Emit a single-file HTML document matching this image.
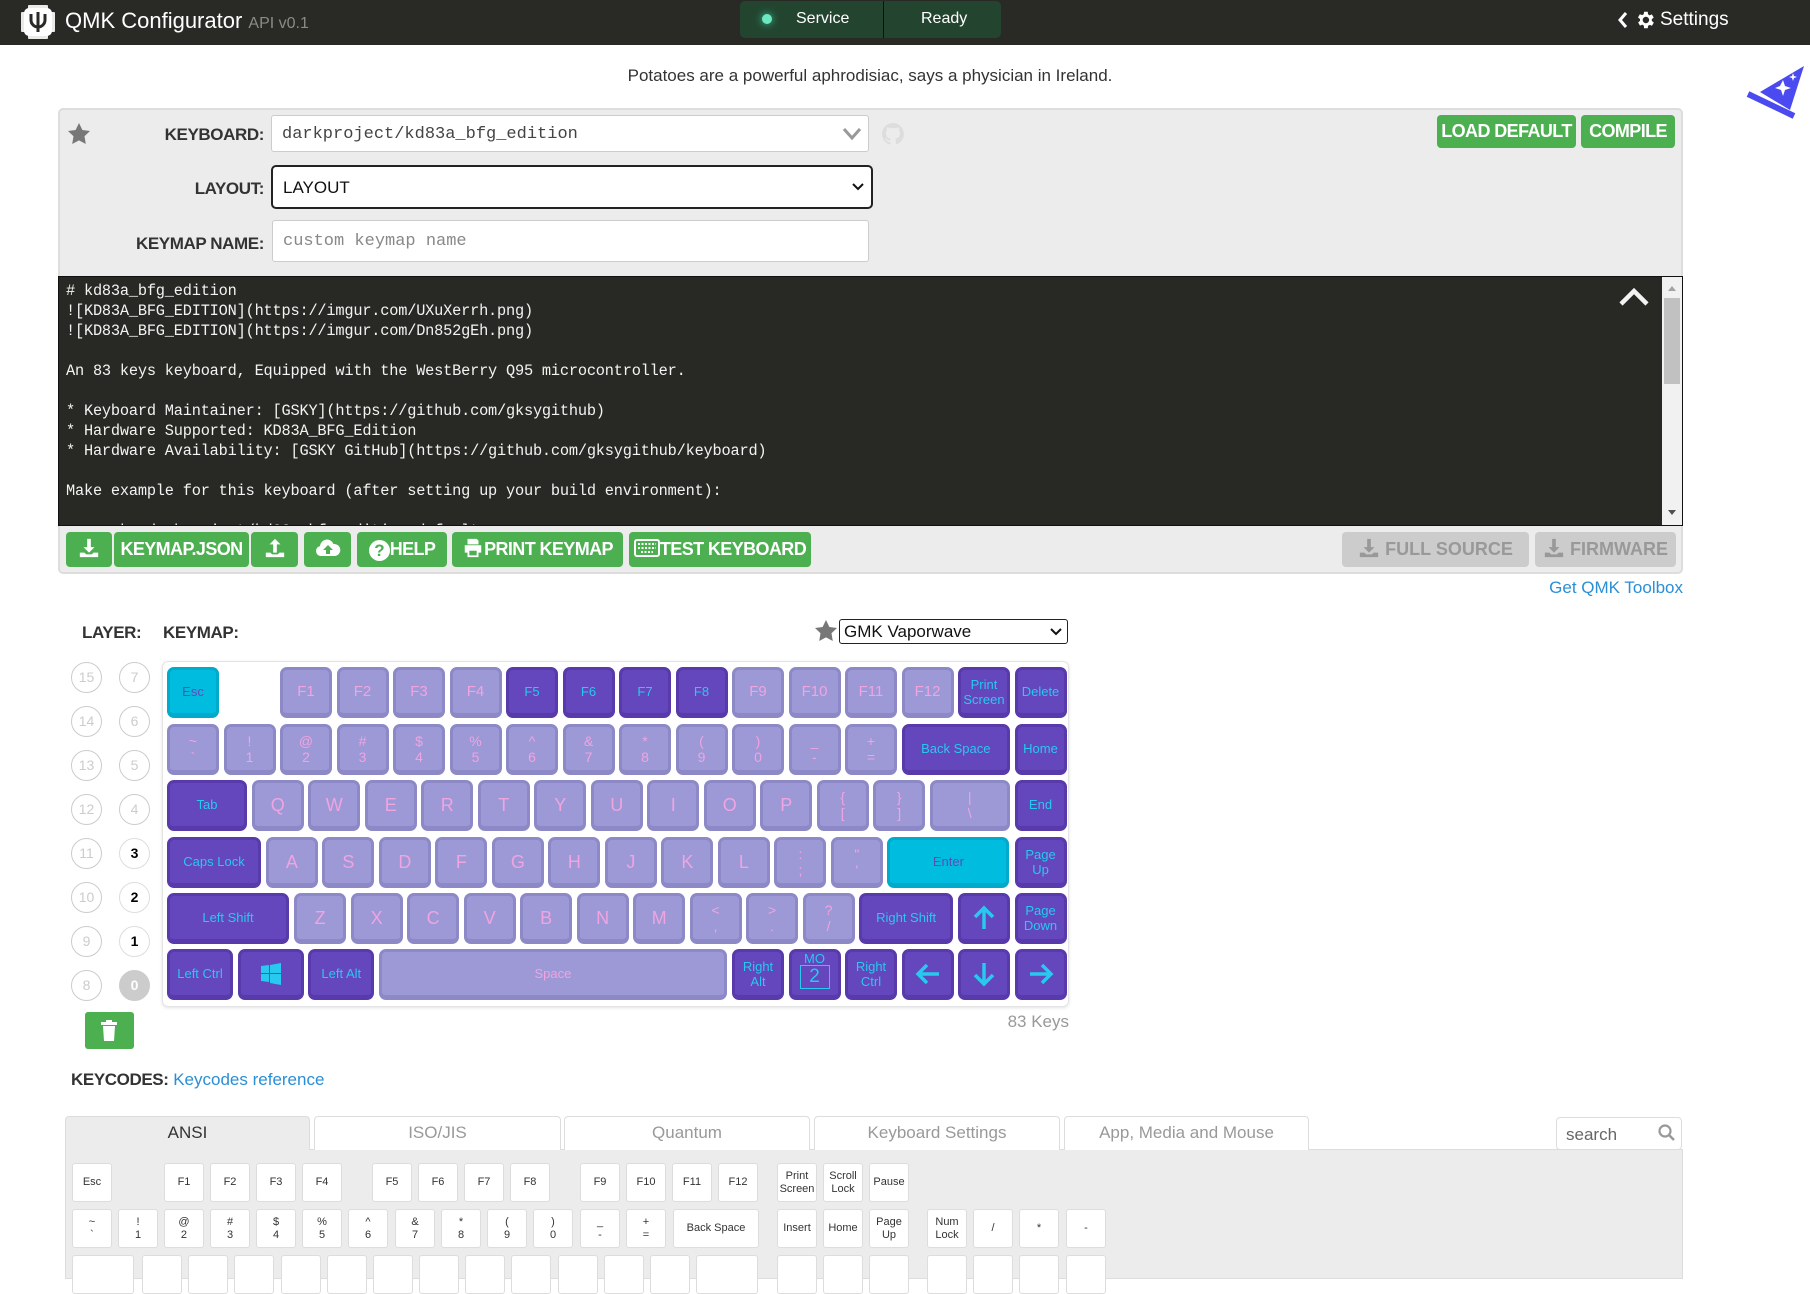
<!DOCTYPE html>
<html><head><meta charset="utf-8">
<style>
*{box-sizing:border-box;margin:0;padding:0}
body{width:1810px;height:1267px;overflow:hidden;background:#fff;font-family:"Liberation Sans",sans-serif;position:relative;color:#333}
.a{position:absolute}
.top{left:0;top:0;width:1810px;height:45px;background:#292925}
.lbl{font-weight:bold;font-size:17px;color:#333;letter-spacing:-0.4px;text-align:right}
.inp{background:#fff;border:1px solid #ccc;border-radius:3px;font-family:"Liberation Mono",monospace;font-size:17px;padding-left:10px;line-height:36px}
.gb{background:#4caf50;color:#fff;font-weight:bold;font-size:18px;letter-spacing:-0.6px;border-radius:4px;text-align:center;line-height:35px;top:532px;height:35px}
.grey{background:#ccc;color:#999;font-weight:bold;font-size:18px;border-radius:4px;text-align:center;line-height:35px;top:532px;height:35px}
.rd{left:58px;top:276px;width:1625px;height:250px;background:#282824;border:1px solid #111;overflow:hidden}
.rd pre{font-family:"Liberation Mono",monospace;font-size:15.3px;line-height:20px;color:#f3f3f3;padding:4px 0 0 7px;letter-spacing:-0.2px}
.lc{width:31px;height:31px;border-radius:50%;border:1px solid #ccc;color:#ccc;font-size:14px;text-align:center;line-height:29px}
.lc.b{color:#000;font-weight:bold;border-color:#ddd}
.k{position:absolute;height:51px;border-radius:7px;background:#9d99d6;border:3px solid #8d89c6;border-bottom-width:5px;color:#f0a4e0;font-size:18px;text-align:center;display:flex;align-items:center;justify-content:center;line-height:18px}
.k.s{font-size:14px;line-height:16px}
.k.d{background:#6446bd;border-color:#583aab;color:#28c9ee;font-size:13px;line-height:15px}
.k.c{background:#00bde0;border-color:#00aacb;color:#6248b9;font-size:13px}
.kc{position:absolute;width:40px;height:39px;background:#fff;border:1px solid #ddd;border-radius:3px;font-size:11px;color:#333;text-align:center;display:flex;align-items:center;justify-content:center;line-height:13px}
.tab{top:1116px;height:34px;border:1px solid #ddd;border-bottom:none;border-radius:4px 4px 0 0;font-size:17px;color:#999;text-align:center;line-height:32px;background:#fff}
</style></head><body>
<div class="a top"></div>
<svg class="a" style="left:20px;top:4px" width="36" height="36" viewBox="0 0 36 36"><g fill="#fff"><rect x="4" y="4" width="28" height="28" rx="5"/><rect x="8" y="1" width="20" height="34" rx="1" opacity=".9"/><rect x="1" y="8" width="34" height="20" rx="1" opacity=".9"/></g><path d="M11 10v6a7 7 0 0 0 14 0v-6M18 8v20" stroke="#292925" stroke-width="3" fill="none"/></svg>
<div class="a" style="left:65px;top:8px;font-size:22px;color:#fff">QMK Configurator <span style="font-size:16px;color:#8a8a86">API v0.1</span></div>
<div class="a" style="left:740px;top:1px;width:261px;height:37px;background:#234530;border-radius:5px"></div>
<div class="a" style="left:883px;top:1px;width:1px;height:37px;background:#111"></div>
<div class="a" style="left:762px;top:14px;width:10px;height:10px;border-radius:50%;background:#6ee8c0;box-shadow:0 0 8px #3c9"></div>
<div class="a" style="left:796px;top:10px;font-size:16px;color:#fff">Service</div>
<div class="a" style="left:921px;top:10px;font-size:16px;color:#fff">Ready</div>
<svg class="a" style="left:1617px;top:11px" width="12" height="18" viewBox="0 0 12 18"><path d="M9 2L3 9l6 7" stroke="#fff" stroke-width="3" fill="none"/></svg>
<svg class="a" style="left:1634px;top:9px" width="22" height="22" viewBox="0 0 24 24"><path fill="#fff" d="M19.4 13a7.5 7.5 0 0 0 0-2l2.1-1.6-2-3.5-2.5 1a7.6 7.6 0 0 0-1.7-1L15 3h-4l-.4 2.7a7.6 7.6 0 0 0-1.7 1l-2.5-1-2 3.5L6.6 11a7.5 7.5 0 0 0 0 2l-2.1 1.6 2 3.5 2.5-1a7.6 7.6 0 0 0 1.7 1L11 21h4l.4-2.7a7.6 7.6 0 0 0 1.7-1l2.5 1 2-3.5zM13 15.5a3.5 3.5 0 1 1 0-7 3.5 3.5 0 0 1 0 7z"/></svg>
<div class="a" style="left:1660px;top:9px;font-size:19px;color:#fff">Settings</div>

<div class="a" style="left:0;top:66px;width:1740px;text-align:center;font-size:17px;color:#333">Potatoes are a powerful aphrodisiac, says a physician in Ireland.</div>
<svg class="a" style="left:1746px;top:64px" width="62" height="56" viewBox="0 0 62 56"><path d="M14 28L58 2 44 46z" fill="#4a4af0"/><path d="M2 30l46 22" stroke="#4a4af0" stroke-width="6"/><path d="M34 22l3-6 2 6 6 2-6 2-2 6-2-6-6-2z" fill="#fff"/><path d="M46 12l1-3 1 3 3 1-3 1-1 3-1-3-3-1z" fill="#fff"/></svg>

<div class="a" style="left:58px;top:108px;width:1625px;height:466px;background:#ececec;border:2px solid #ddd;border-radius:5px"></div>
<svg class="a" style="left:67px;top:122px" width="24" height="24" viewBox="0 0 24 24"><path fill="#777" d="M12 1l3.4 7 7.6 1-5.5 5.3 1.3 7.7L12 18.4 5.2 22l1.3-7.7L1 9l7.6-1z"/></svg>
<div class="a lbl" style="left:120px;top:125px;width:144px">KEYBOARD:</div>
<div class="a inp" style="left:271px;top:115px;width:598px;height:37px;color:#444;line-height:38px">darkproject/kd83a_bfg_edition</div>
<svg class="a" style="left:842px;top:127px" width="20" height="14" viewBox="0 0 20 14"><path d="M2 2l8 9 8-9" stroke="#999" stroke-width="3" fill="none"/></svg>
<svg class="a" style="left:882px;top:123px" width="22" height="22" viewBox="0 0 16 16"><path fill="#ddd" d="M8 0a8 8 0 0 0-2.5 15.6c.4 0 .5-.2.5-.4v-1.5c-2.2.5-2.7-1-2.7-1-.4-.9-.9-1.2-.9-1.2-.7-.5.1-.5.1-.5.8.1 1.200.8 1.2.8.7 1.3 1.9.9 2.3.7.1-.5.3-.9.5-1.1-1.8-.2-3.6-.9-3.6-4 0-.9.3-1.6.8-2.1-.1-.2-.4-1 .1-2.1 0 0 .7-.2 2.2.8a7.5 7.5 0 0 1 4 0c1.5-1 2.2-.8 2.2-.8.4 1.1.2 1.9.1 2.1.5.6.8 1.3.8 2.1 0 3.1-1.9 3.8-3.6 4 .3.3.6.8.6 1.5v2.2c0 .2.1.5.6.4A8 8 0 0 0 8 0z"/></svg>
<div class="a gb" style="left:1437px;top:115px;width:139px;height:33px;line-height:33px">LOAD DEFAULT</div>
<div class="a gb" style="left:1581px;top:115px;width:94px;height:33px;line-height:33px">COMPILE</div>
<div class="a lbl" style="left:120px;top:179px;width:144px">LAYOUT:</div>
<div class="a inp" style="left:271px;top:165px;width:602px;height:44px;border:2px solid #222;border-radius:5px;font-family:'Liberation Sans',sans-serif;font-size:17px;line-height:41px;color:#111">LAYOUT</div>
<svg class="a" style="left:852px;top:182px" width="12" height="10" viewBox="0 0 12 10"><path d="M1 2l5 5 5-5" stroke="#111" stroke-width="2" fill="none"/></svg>
<div class="a lbl" style="left:100px;top:234px;width:164px">KEYMAP NAME:</div>
<div class="a inp" style="left:272px;top:220px;width:597px;height:42px;line-height:42px;color:#888">custom keymap name</div>

<div class="a rd"><pre># kd83a_bfg_edition
![KD83A_BFG_EDITION](https://imgur.com/UXuXerrh.png)
![KD83A_BFG_EDITION](https://imgur.com/Dn852gEh.png)

An 83 keys keyboard, Equipped with the WestBerry Q95 microcontroller.

* Keyboard Maintainer: [GSKY](https://github.com/gksygithub)
* Hardware Supported: KD83A_BFG_Edition
* Hardware Availability: [GSKY GitHub](https://github.com/gksygithub/keyboard)

Make example for this keyboard (after setting up your build environment):

    make darkproject/kd83a_bfg_edition:default</pre></div>
<div class="a" style="left:1662px;top:277px;width:20px;height:248px;background:#f1f1f1"></div>
<div class="a" style="left:1664px;top:298px;width:16px;height:86px;background:#c1c1c1"></div>
<svg class="a" style="left:1666px;top:283px" width="12" height="10"><path d="M2 8l4-5 4 5z" fill="#a3a3a3"/></svg>
<svg class="a" style="left:1666px;top:508px" width="12" height="10"><path d="M2 2l4 5 4-5z" fill="#505050"/></svg>
<svg class="a" style="left:1618px;top:286px" width="32" height="22" viewBox="0 0 32 22"><path d="M3 18L16 5l13 13" stroke="#f3f3f3" stroke-width="4.5" fill="none"/></svg>

<div class="a gb" style="left:66px;width:46px"><svg width="22" height="22" viewBox="0 0 24 24" style="vertical-align:-4px"><path fill="#fff" d="M10 2h4v9h4l-6 6-6-6h4zM2 17h5l2 2h6l2-2h5v5H2z"/></svg></div>
<div class="a gb" style="left:114px;width:135px">KEYMAP.JSON</div>
<div class="a gb" style="left:251px;width:47px"><svg width="22" height="22" viewBox="0 0 24 24" style="vertical-align:-4px"><path fill="#fff" d="M10 17h4V8h4l-6-6-6 6h4zM2 17h5l2 2h6l2-2h5v5H2z"/></svg></div>
<div class="a gb" style="left:304px;width:47px"><svg width="26" height="22" viewBox="0 0 26 22" style="vertical-align:-4px"><path fill="#fff" d="M6 19a5 5 0 0 1-1-9.9A7 7 0 0 1 18.5 7 6 6 0 0 1 20 19z"/><path fill="#4caf50" d="M13 8l-5 5h3v4h4v-4h3z"/></svg></div>
<div class="a gb" style="left:357px;width:90px"><span style="display:inline-block;width:21px;height:21px;border-radius:50%;background:#fff;color:#4caf50;font-size:17px;line-height:21px;vertical-align:-1px">?</span>HELP</div>
<div class="a gb" style="left:452px;width:171px"><svg width="22" height="22" viewBox="0 0 24 24" style="vertical-align:-4px"><path fill="#fff" d="M6 2h10l2 2v4H6zM3 9h18v8h-3v5H6v-5H3zM8 15v5h8v-5z"/></svg>PRINT KEYMAP</div>
<div class="a gb" style="left:629px;width:182px"><svg width="26" height="18" viewBox="0 0 26 18" style="vertical-align:-2px"><rect x="1" y="1" width="24" height="16" rx="2" fill="none" stroke="#fff" stroke-width="2"/><path stroke="#fff" stroke-width="2" d="M4 5h18M4 9h18M7 13h12" stroke-dasharray="2 1.5"/></svg>TEST KEYBOARD</div>
<div class="a grey" style="left:1342px;width:187px"><svg width="22" height="22" viewBox="0 0 24 24" style="vertical-align:-4px"><path fill="#999" d="M10 2h4v9h4l-6 6-6-6h4zM2 17h5l2 2h6l2-2h5v5H2z"/></svg> FULL SOURCE</div>
<div class="a grey" style="left:1535px;width:141px"><svg width="22" height="22" viewBox="0 0 24 24" style="vertical-align:-4px"><path fill="#999" d="M10 2h4v9h4l-6 6-6-6h4zM2 17h5l2 2h6l2-2h5v5H2z"/></svg> FIRMWARE</div>
<div class="a" style="left:1540px;top:578px;width:143px;text-align:right;font-size:17px;color:#2a8fd6">Get QMK Toolbox</div>

<div class="a lbl" style="left:82px;top:623px;text-align:left">LAYER:</div>
<div class="a lbl" style="left:163px;top:623px;text-align:left">KEYMAP:</div>
<svg class="a" style="left:814px;top:619px" width="24" height="24" viewBox="0 0 24 24"><path fill="#777" d="M12 1l3.4 7 7.6 1-5.5 5.3 1.3 7.7L12 18.4 5.2 22l1.3-7.7L1 9l7.6-1z"/></svg>
<div class="a" style="left:839px;top:619px;width:229px;height:25px;border:1px solid #222;border-radius:3px;font-size:17px;line-height:23px;padding-left:4px;color:#111">GMK Vaporwave</div>
<svg class="a" style="left:1050px;top:627px" width="12" height="10" viewBox="0 0 12 10"><path d="M1 2l5 5 5-5" stroke="#111" stroke-width="2" fill="none"/></svg>

<div class="a lc" style="left:71px;top:662px">15</div><div class="a lc" style="left:119px;top:662px">7</div>
<div class="a lc" style="left:71px;top:706px">14</div><div class="a lc" style="left:119px;top:706px">6</div>
<div class="a lc" style="left:71px;top:750px">13</div><div class="a lc" style="left:119px;top:750px">5</div>
<div class="a lc" style="left:71px;top:794px">12</div><div class="a lc" style="left:119px;top:794px">4</div>
<div class="a lc" style="left:71px;top:838px">11</div><div class="a lc b" style="left:119px;top:838px">3</div>
<div class="a lc" style="left:71px;top:882px">10</div><div class="a lc b" style="left:119px;top:882px">2</div>
<div class="a lc" style="left:71px;top:926px">9</div><div class="a lc b" style="left:119px;top:926px">1</div>
<div class="a lc" style="left:71px;top:970px">8</div><div class="a lc" style="left:119px;top:970px;background:#ccc;color:#fff;font-weight:bold">0</div>
<div class="a" style="left:85px;top:1012px;width:49px;height:37px;background:#4caf50;border-radius:3px"></div>
<svg class="a" style="left:100px;top:1019px" width="18" height="22" viewBox="0 0 18 22"><path fill="#fff" d="M1 3h16v3H1zM6 1h6v2H6zM3 7h12l-1 15H4z"/></svg>
<div class="a" style="left:960px;top:1012px;width:109px;text-align:right;font-size:17px;color:#999">83 Keys</div>

<div class="a" style="left:162px;top:661px;width:907px;height:346px;border:1px solid #e4e4e4;border-radius:6px;box-shadow:0 1px 3px rgba(0,0,0,.12)"></div>
<div class="k c" style="left:167px;top:667px;width:52px">Esc</div>
<div class="k" style="left:280px;top:667px;width:52px;font-size:15px">F1</div>
<div class="k" style="left:336.5px;top:667px;width:52px;font-size:15px">F2</div>
<div class="k" style="left:393px;top:667px;width:52px;font-size:15px">F3</div>
<div class="k" style="left:449.5px;top:667px;width:52px;font-size:15px">F4</div>
<div class="k d" style="left:506px;top:667px;width:52px">F5</div>
<div class="k d" style="left:562.5px;top:667px;width:52px">F6</div>
<div class="k d" style="left:619px;top:667px;width:52px">F7</div>
<div class="k d" style="left:675.5px;top:667px;width:52px">F8</div>
<div class="k" style="left:732px;top:667px;width:52px;font-size:15px">F9</div>
<div class="k" style="left:788.5px;top:667px;width:52px;font-size:15px">F10</div>
<div class="k" style="left:845px;top:667px;width:52px;font-size:15px">F11</div>
<div class="k" style="left:901.5px;top:667px;width:52px;font-size:15px">F12</div>
<div class="k d" style="left:958px;top:667px;width:52px">Print<br>Screen</div>
<div class="k d" style="left:1014.5px;top:667px;width:52px">Delete</div>
<div class="k s" style="left:167px;top:724px;width:52px">~<br>`</div>
<div class="k s" style="left:223.5px;top:724px;width:52px">!<br>1</div>
<div class="k s" style="left:280px;top:724px;width:52px">@<br>2</div>
<div class="k s" style="left:336.5px;top:724px;width:52px">#<br>3</div>
<div class="k s" style="left:393px;top:724px;width:52px">$<br>4</div>
<div class="k s" style="left:449.5px;top:724px;width:52px">%<br>5</div>
<div class="k s" style="left:506px;top:724px;width:52px">^<br>6</div>
<div class="k s" style="left:562.5px;top:724px;width:52px">&amp;<br>7</div>
<div class="k s" style="left:619px;top:724px;width:52px">*<br>8</div>
<div class="k s" style="left:675.5px;top:724px;width:52px">(<br>9</div>
<div class="k s" style="left:732px;top:724px;width:52px">)<br>0</div>
<div class="k s" style="left:788.5px;top:724px;width:52px">_<br>-</div>
<div class="k s" style="left:845px;top:724px;width:52px">+<br>=</div>
<div class="k d" style="left:901.5px;top:724px;width:108.5px">Back Space</div>
<div class="k d" style="left:1014.5px;top:724px;width:52px">Home</div>
<div class="k d" style="left:167px;top:780px;width:80px">Tab</div>
<div class="k" style="left:251.75px;top:780px;width:52px">Q</div>
<div class="k" style="left:308.25px;top:780px;width:52px">W</div>
<div class="k" style="left:364.75px;top:780px;width:52px">E</div>
<div class="k" style="left:421.25px;top:780px;width:52px">R</div>
<div class="k" style="left:477.75px;top:780px;width:52px">T</div>
<div class="k" style="left:534.25px;top:780px;width:52px">Y</div>
<div class="k" style="left:590.75px;top:780px;width:52px">U</div>
<div class="k" style="left:647.25px;top:780px;width:52px">I</div>
<div class="k" style="left:703.75px;top:780px;width:52px">O</div>
<div class="k" style="left:760.25px;top:780px;width:52px">P</div>
<div class="k s" style="left:816.75px;top:780px;width:52px">{<br>[</div>
<div class="k s" style="left:873.25px;top:780px;width:52px">}<br>]</div>
<div class="k s" style="left:929.75px;top:780px;width:80px">|<br>\</div>
<div class="k d" style="left:1014.5px;top:780px;width:52px">End</div>
<div class="k d" style="left:167px;top:837px;width:94px">Caps Lock</div>
<div class="k" style="left:265.9px;top:837px;width:52px">A</div>
<div class="k" style="left:322.4px;top:837px;width:52px">S</div>
<div class="k" style="left:378.9px;top:837px;width:52px">D</div>
<div class="k" style="left:435.4px;top:837px;width:52px">F</div>
<div class="k" style="left:491.9px;top:837px;width:52px">G</div>
<div class="k" style="left:548.4px;top:837px;width:52px">H</div>
<div class="k" style="left:604.9px;top:837px;width:52px">J</div>
<div class="k" style="left:661.4px;top:837px;width:52px">K</div>
<div class="k" style="left:717.9px;top:837px;width:52px">L</div>
<div class="k s" style="left:774.4px;top:837px;width:52px">:<br>;</div>
<div class="k s" style="left:830.9px;top:837px;width:52px">"<br>'</div>
<div class="k c" style="left:887.4px;top:837px;width:122px">Enter</div>
<div class="k d" style="left:1014.5px;top:837px;width:52px">Page<br>Up</div>
<div class="k d" style="left:167px;top:893px;width:122px">Left Shift</div>
<div class="k" style="left:294.1px;top:893px;width:52px">Z</div>
<div class="k" style="left:350.6px;top:893px;width:52px">X</div>
<div class="k" style="left:407.1px;top:893px;width:52px">C</div>
<div class="k" style="left:463.6px;top:893px;width:52px">V</div>
<div class="k" style="left:520.1px;top:893px;width:52px">B</div>
<div class="k" style="left:576.6px;top:893px;width:52px">N</div>
<div class="k" style="left:633.1px;top:893px;width:52px">M</div>
<div class="k s" style="left:689.6px;top:893px;width:52px">&lt;<br>,</div>
<div class="k s" style="left:746.1px;top:893px;width:52px">&gt;<br>.</div>
<div class="k s" style="left:802.6px;top:893px;width:52px">?<br>/</div>
<div class="k d" style="left:859.1px;top:893px;width:94px">Right Shift</div>
<div class="k d" style="left:958px;top:893px;width:52px"><svg width="24" height="26" viewBox="0 0 24 26"><path d="M12 24V4M3 12l9-9 9 9" stroke="#28c9ee" stroke-width="3.5" fill="none"/></svg></div>
<div class="k d" style="left:1014.5px;top:893px;width:52px">Page<br>Down</div>
<div class="k d" style="left:167px;top:949px;width:66px">Left Ctrl</div>
<div class="k d" style="left:237.6px;top:949px;width:66px"><svg width="22" height="22" viewBox="0 0 22 22"><path fill="#28c9ee" d="M1 3l8-1v8H1zM10 2l11-2v10H10zM1 11h8v8l-8-1zM10 11h11v11l-11-2z"/></svg></div>
<div class="k d" style="left:308.25px;top:949px;width:66px">Left Alt</div>
<div class="k" style="left:378.9px;top:949px;width:348px;font-size:13px">Space</div>
<div class="k d" style="left:732px;top:949px;width:52px">Right<br>Alt</div>
<div class="k d" style="left:788.5px;top:949px;width:52px;flex-direction:column;justify-content:flex-start"><span style="font-size:13px;line-height:13px">MO</span><span style="display:block;width:30px;height:24px;border:1px solid #28c9ee;font-size:19px;line-height:22px">2</span></div>
<div class="k d" style="left:845px;top:949px;width:52px">Right<br>Ctrl</div>
<div class="k d" style="left:901.5px;top:949px;width:52px"><svg width="26" height="24" viewBox="0 0 26 24"><path d="M24 12H4M12 3l-9 9 9 9" stroke="#28c9ee" stroke-width="3.5" fill="none"/></svg></div>
<div class="k d" style="left:958px;top:949px;width:52px"><svg width="24" height="26" viewBox="0 0 24 26"><path d="M12 2v20M3 14l9 9 9-9" stroke="#28c9ee" stroke-width="3.5" fill="none"/></svg></div>
<div class="k d" style="left:1014.5px;top:949px;width:52px"><svg width="26" height="24" viewBox="0 0 26 24"><path d="M2 12h20M14 3l9 9-9 9" stroke="#28c9ee" stroke-width="3.5" fill="none"/></svg></div>

<div class="a" style="left:71px;top:1070px;font-size:17px"><b style="letter-spacing:-0.4px">KEYCODES:</b> <span style="color:#2a8fd6">Keycodes reference</span></div>

<div class="a" style="left:65px;top:1149px;width:1618px;height:130px;background:#ececec;border:1px solid #ddd"></div>
<div class="a tab" style="left:65px;width:245px;background:#ececec;color:#333">ANSI</div>
<div class="a tab" style="left:314px;width:247px">ISO/JIS</div>
<div class="a tab" style="left:564px;width:246px">Quantum</div>
<div class="a tab" style="left:814px;width:246px">Keyboard Settings</div>
<div class="a tab" style="left:1064px;width:245px">App, Media and Mouse</div>
<div class="a" style="left:1556px;top:1117px;width:126px;height:33px;border:1px solid #ddd;border-radius:4px;background:#fff;font-size:17px;color:#666;padding-left:9px;line-height:33px">search</div>
<svg class="a" style="left:1658px;top:1124px" width="18" height="18" viewBox="0 0 18 18"><circle cx="7" cy="7" r="5.5" stroke="#999" stroke-width="2.2" fill="none"/><path d="M11 11l5 5" stroke="#999" stroke-width="2.5"/></svg>

<div class="kc" style="left:72px;top:1163px">Esc</div>
<div class="kc" style="left:164px;top:1163px">F1</div><div class="kc" style="left:210px;top:1163px">F2</div><div class="kc" style="left:256px;top:1163px">F3</div><div class="kc" style="left:302px;top:1163px">F4</div>
<div class="kc" style="left:372px;top:1163px">F5</div><div class="kc" style="left:418px;top:1163px">F6</div><div class="kc" style="left:464px;top:1163px">F7</div><div class="kc" style="left:510px;top:1163px">F8</div>
<div class="kc" style="left:580px;top:1163px">F9</div><div class="kc" style="left:626px;top:1163px">F10</div><div class="kc" style="left:672px;top:1163px">F11</div><div class="kc" style="left:718px;top:1163px">F12</div>
<div class="kc" style="left:777px;top:1163px">Print<br>Screen</div><div class="kc" style="left:823px;top:1163px">Scroll<br>Lock</div><div class="kc" style="left:869px;top:1163px">Pause</div>

<div class="kc" style="left:72px;top:1209px">~<br>`</div><div class="kc" style="left:118px;top:1209px">!<br>1</div><div class="kc" style="left:164px;top:1209px">@<br>2</div><div class="kc" style="left:210px;top:1209px">#<br>3</div><div class="kc" style="left:256px;top:1209px">$<br>4</div><div class="kc" style="left:302px;top:1209px">%<br>5</div><div class="kc" style="left:348px;top:1209px">^<br>6</div><div class="kc" style="left:395px;top:1209px">&amp;<br>7</div><div class="kc" style="left:441px;top:1209px">*<br>8</div><div class="kc" style="left:487px;top:1209px">(<br>9</div><div class="kc" style="left:533px;top:1209px">)<br>0</div><div class="kc" style="left:580px;top:1209px">_<br>-</div><div class="kc" style="left:626px;top:1209px">+<br>=</div>
<div class="kc" style="left:673px;top:1209px;width:86px">Back Space</div>
<div class="kc" style="left:777px;top:1209px">Insert</div><div class="kc" style="left:823px;top:1209px">Home</div><div class="kc" style="left:869px;top:1209px">Page<br>Up</div>
<div class="kc" style="left:927px;top:1209px">Num<br>Lock</div><div class="kc" style="left:973px;top:1209px">/</div><div class="kc" style="left:1019px;top:1209px">*</div><div class="kc" style="left:1066px;top:1209px">-</div>

<div class="kc" style="left:72px;top:1255px;width:62px"></div><div class="kc" style="left:142px;top:1255px"></div><div class="kc" style="left:188px;top:1255px"></div><div class="kc" style="left:234px;top:1255px"></div><div class="kc" style="left:281px;top:1255px"></div><div class="kc" style="left:327px;top:1255px"></div><div class="kc" style="left:373px;top:1255px"></div><div class="kc" style="left:419px;top:1255px"></div><div class="kc" style="left:465px;top:1255px"></div><div class="kc" style="left:511px;top:1255px"></div><div class="kc" style="left:558px;top:1255px"></div><div class="kc" style="left:604px;top:1255px"></div><div class="kc" style="left:650px;top:1255px"></div><div class="kc" style="left:696px;top:1255px;width:62px"></div>
<div class="kc" style="left:777px;top:1255px"></div><div class="kc" style="left:823px;top:1255px"></div><div class="kc" style="left:869px;top:1255px"></div>
<div class="kc" style="left:927px;top:1255px"></div><div class="kc" style="left:973px;top:1255px"></div><div class="kc" style="left:1019px;top:1255px"></div><div class="kc" style="left:1066px;top:1255px"></div>
</body></html>
